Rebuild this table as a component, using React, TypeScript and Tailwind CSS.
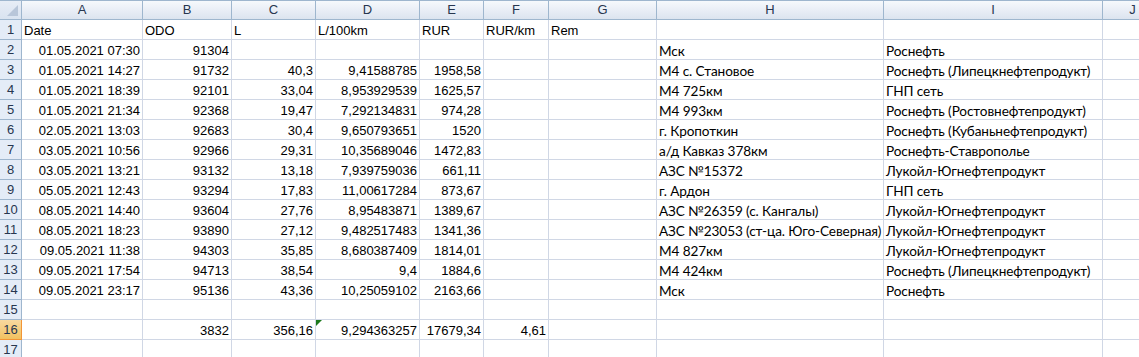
import React from "react";

const cols = [
  { key: "A", w: 121 },
  { key: "B", w: 89 },
  { key: "C", w: 84 },
  { key: "D", w: 104 },
  { key: "E", w: 64 },
  { key: "F", w: 65 },
  { key: "G", w: 108 },
  { key: "H", w: 227 },
  { key: "I", w: 219 },
  { key: "J", w: 60 },
];

type Row = string[];

const rows: Row[] = [
  ["Date", "ODO", "L", "L/100km", "RUR", "RUR/km", "Rem", "", "", ""],
  ["01.05.2021 07:30", "91304", "", "", "", "", "", "Мск", "Роснефть", ""],
  ["01.05.2021 14:27", "91732", "40,3", "9,41588785", "1958,58", "", "", "М4 с. Становое", "Роснефть (Липецкнефтепродукт)", ""],
  ["01.05.2021 18:39", "92101", "33,04", "8,953929539", "1625,57", "", "", "М4 725км", "ГНП сеть", ""],
  ["01.05.2021 21:34", "92368", "19,47", "7,292134831", "974,28", "", "", "М4 993км", "Роснефть (Ростовнефтепродукт)", ""],
  ["02.05.2021 13:03", "92683", "30,4", "9,650793651", "1520", "", "", "г. Кропоткин", "Роснефть (Кубаньнефтепродукт)", ""],
  ["03.05.2021 10:56", "92966", "29,31", "10,35689046", "1472,83", "", "", "а/д Кавказ 378км", "Роснефть-Ставрополье", ""],
  ["03.05.2021 13:21", "93132", "13,18", "7,939759036", "661,11", "", "", "АЗС №15372", "Лукойл-Югнефтепродукт", ""],
  ["05.05.2021 12:43", "93294", "17,83", "11,00617284", "873,67", "", "", "г. Ардон", "ГНП сеть", ""],
  ["08.05.2021 14:40", "93604", "27,76", "8,95483871", "1389,67", "", "", "АЗС №26359 (с. Кангалы)", "Лукойл-Югнефтепродукт", ""],
  ["08.05.2021 18:23", "93890", "27,12", "9,482517483", "1341,36", "", "", "АЗС №23053 (ст-ца. Юго-Северная)", "Лукойл-Югнефтепродукт", ""],
  ["09.05.2021 11:38", "94303", "35,85", "8,680387409", "1814,01", "", "", "М4 827км", "Лукойл-Югнефтепродукт", ""],
  ["09.05.2021 17:54", "94713", "38,54", "9,4", "1884,6", "", "", "М4 424км", "Роснефть (Липецкнефтепродукт)", ""],
  ["09.05.2021 23:17", "95136", "43,36", "10,25059102", "2163,66", "", "", "Мск", "Роснефть", ""],
  ["", "", "", "", "", "", "", "", "", ""],
  ["", "3832", "356,16", "9,294363257", "17679,34", "4,61", "", "", "", ""],
  ["", "", "", "", "", "", "", "", "", ""],
];

const gridTemplate = "22px " + cols.map((c) => c.w + "px").join(" ");

function Cell({ r, c, v }: { r: number; c: number; v: string }) {
  const isHeaderRow = r === 0;
  const isCalibri = c >= 7;
  const isNum = !isHeaderRow && c >= 0 && c <= 6 && v !== "";
  const green = r === 15 && c === 3;
  return (
    <div
      className={
        "relative h-[20px] border-r border-b border-[#d0d7e5] overflow-visible whitespace-nowrap leading-[20px] text-black " +
        (isCalibri
          ? "text-[13.6px] pl-[2px] pt-[1px] tracking-[-0.1px] font-['Lato','Liberation_Sans',sans-serif]"
          : "text-[13px] pt-[1px] font-['Liberation_Sans',Arial,sans-serif] ") +
        (isNum ? " text-right pr-[2px]" : " text-left pl-[2px]")
      }
    >
      {green && (
        <div className="absolute left-0 top-0 w-0 h-0 border-t-[6px] border-t-[#1d7a1d] border-r-[6px] border-r-transparent" />
      )}
      {v}
    </div>
  );
}

export default function App() {
  return (
    <div className="w-[1139px] h-[357px] overflow-hidden bg-white select-none">
      <div className="grid" style={{ gridTemplateColumns: gridTemplate }}>
        <div className="relative h-[20px] border-r border-b border-[#9eb6ce] bg-gradient-to-b from-[#e7edf6] to-[#d9e3f0] border-t border-t-[#9eb6ce]">
          <div className="absolute right-[3px] bottom-[3px] w-0 h-0 border-b-[11px] border-b-[#b8c6d9] border-l-[11px] border-l-transparent" />
        </div>
        {cols.map((c) => (
          <div
            key={c.key}
            className="h-[20px] border-r border-b border-[#9eb6ce] border-t border-t-[#9eb6ce] bg-gradient-to-b from-[#f6f9fc] via-[#e9eef6] to-[#dce4ef] text-center leading-[18px] text-[13px] text-[#27364f] font-['Liberation_Sans',Arial,sans-serif]"
          >
            {c.key}
          </div>
        ))}
        {rows.map((row, ri) => (
          <React.Fragment key={ri}>
            <div
              className={
                "h-[20px] border-r border-b text-center leading-[20px] text-[13px] font-['Liberation_Sans',Arial,sans-serif] " +
                (ri === 15
                  ? "bg-gradient-to-b from-[#f9d99f] to-[#f1c15f] border-[#f29536] text-[#27364f]"
                  : "bg-[#e4ecf7] border-[#9eb6ce] text-[#27364f]")
              }
            >
              {ri + 1}
            </div>
            {row.map((v, ci) => (
              <Cell key={ci} r={ri} c={ci} v={v} />
            ))}
          </React.Fragment>
        ))}
      </div>
    </div>
  );
}
